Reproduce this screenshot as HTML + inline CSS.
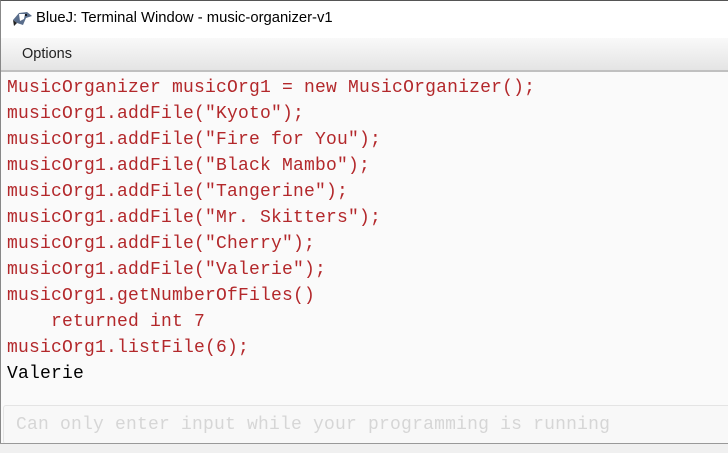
<!DOCTYPE html>
<html><head><style>
html,body{margin:0;padding:0;width:728px;height:452px;overflow:hidden;background:#f0f0f0;}
.win{position:absolute;left:0;top:0;width:728px;height:444px;border-top:1px solid #555;border-left:1px solid #888;box-sizing:border-box;background:#fafafa;}
.title{position:absolute;left:0;top:0;width:728px;height:37px;background:#fff;font-family:"Liberation Sans",sans-serif;font-size:14.8px;color:#000;}
.title span{position:absolute;left:35px;top:9px;}
.menu{position:absolute;left:0;top:37px;width:728px;height:32px;background:linear-gradient(#f9f9f9,#e4e4e4);border-bottom:2px solid #c0c0c0;font-family:"Liberation Sans",sans-serif;font-size:14.5px;color:#222;}
.menu span{position:absolute;left:21px;top:8px;}
.out{position:absolute;left:6px;top:74px;font-family:"Liberation Mono",monospace;font-size:18px;letter-spacing:0.2px;line-height:26px;color:#b3282b;white-space:pre;}
.blk{color:#000;}
.inp{position:absolute;left:2px;top:404px;width:728px;height:38px;background:#f8f8f8;border-top:1px solid #e4e4e4;border-left:1px solid #e4e4e4;border-radius:3px;}
.inp span{position:absolute;left:12px;top:9px;font-family:"Liberation Mono",monospace;font-size:18px;letter-spacing:0.2px;color:#d6d6d6;white-space:pre;}
.bot{position:absolute;left:0;top:443px;width:728px;height:9px;background:#f0f0f0;border-top:1px solid #999;}
</style></head><body>
<div class="win">
<div class="title">
<svg style="position:absolute;left:10px;top:9px" width="22" height="18" viewBox="0 0 22 18"><path d="M2 10 L8 3 L16 2 L21 6 L15 8 L12 15 L6 13 Z" fill="#5a6e8c"/><path d="M8 4 L14 4 L13 9 L9 11 Z" fill="#fff"/><circle cx="15" cy="5" r="1" fill="#000"/><path d="M2 10 L6 13 L3 16 Z" fill="#222"/></svg>
<span>BlueJ: Terminal Window - music-organizer-v1</span></div>
<div class="menu"><span>Options</span></div>
<div class="out">MusicOrganizer musicOrg1 = new MusicOrganizer();
musicOrg1.addFile("Kyoto");
musicOrg1.addFile("Fire for You");
musicOrg1.addFile("Black Mambo");
musicOrg1.addFile("Tangerine");
musicOrg1.addFile("Mr. Skitters");
musicOrg1.addFile("Cherry");
musicOrg1.addFile("Valerie");
musicOrg1.getNumberOfFiles()
    returned int 7
musicOrg1.listFile(6);
<span class="blk">Valerie</span></div>
<div class="inp"><span>Can only enter input while your programming is running</span></div>
</div>
<div class="bot"></div>
</body></html>
